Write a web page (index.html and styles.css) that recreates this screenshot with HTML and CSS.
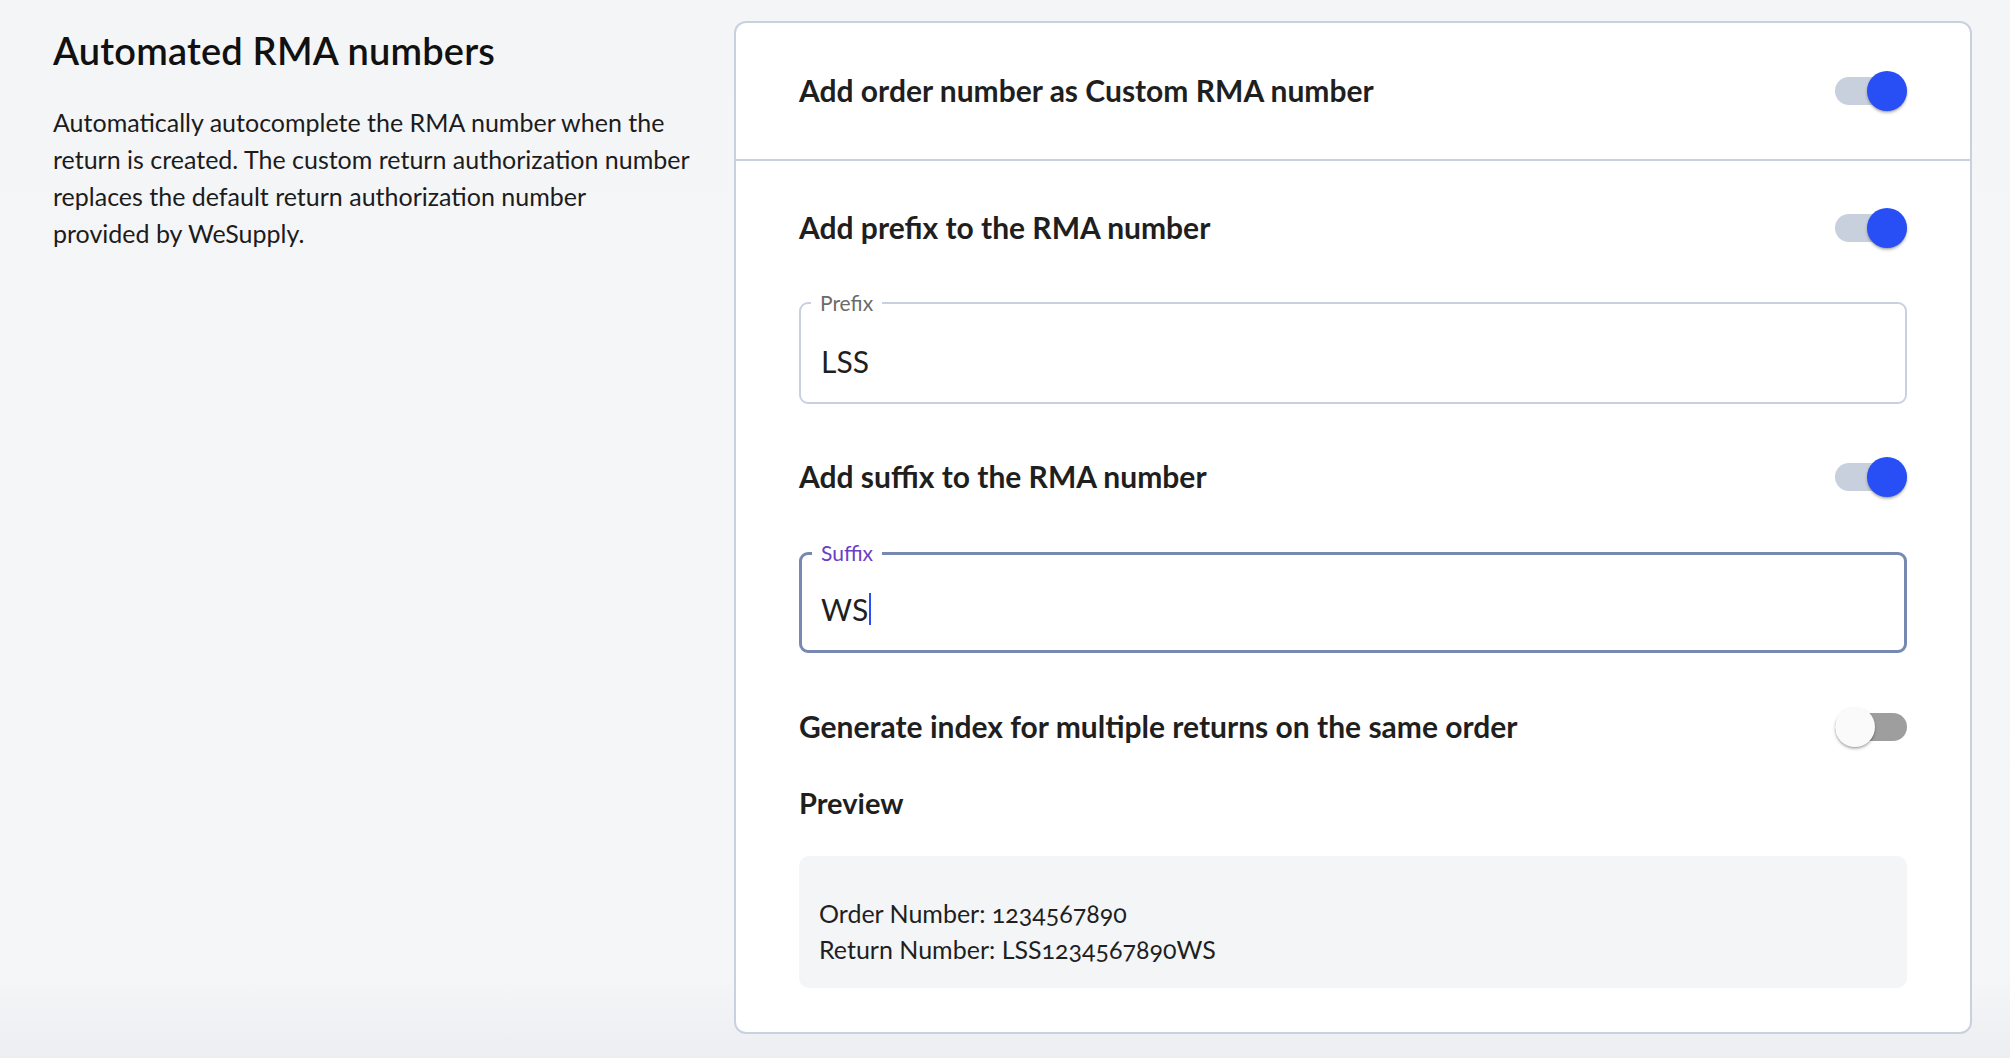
FILE: index.html
```html
<!DOCTYPE html>
<html lang="en">
<head>
<meta charset="utf-8">
<title>Automated RMA numbers</title>
<link rel="stylesheet" href="styles.css">
</head>
<body>
<div class="page">
  <section class="intro">
    <h1 class="intro-title">Automated RMA numbers</h1>
    <p class="intro-text">Automatically autocomplete the RMA number when the return is created. The custom return authorization number replaces the default return authorization number<br>provided by WeSupply.</p>
  </section>

  <div class="card">
    <div class="card-section card-head">
      <div class="setting-row">
        <span class="setting-title">Add order number as Custom RMA number</span>
        <span class="switch is-on"><span class="switch-track"></span><span class="switch-thumb"></span></span>
      </div>
    </div>

    <div class="card-section card-body">
      <div class="setting-row">
        <span class="setting-title">Add prefix to the RMA number</span>
        <span class="switch is-on"><span class="switch-track"></span><span class="switch-thumb"></span></span>
      </div>

      <fieldset class="field field-prefix">
        <legend class="field-label">Prefix</legend>
        <div class="field-value">LSS</div>
      </fieldset>

      <div class="setting-row row-suffix">
        <span class="setting-title">Add suffix to the RMA number</span>
        <span class="switch is-on"><span class="switch-track"></span><span class="switch-thumb"></span></span>
      </div>

      <fieldset class="field field-suffix is-focused">
        <legend class="field-label">Suffix</legend>
        <div class="field-value">WS<span class="caret"></span></div>
      </fieldset>

      <div class="setting-row row-index">
        <span class="setting-title">Generate index for multiple returns on the same order</span>
        <span class="switch is-off"><span class="switch-track"></span><span class="switch-thumb"></span></span>
      </div>

      <div class="preview-title">Preview</div>
      <div class="preview-box">
        <div class="preview-line">Order Number: 1234567890</div>
        <div class="preview-line">Return Number: LSS1234567890WS</div>
      </div>
    </div>
  </div>
</div>
</body>
</html>
```

FILE: styles.css
```css
html, body {
  margin: 0;
  padding: 0;
}

body {
  font-family: "Lato", "Open Sans", sans-serif;
  font-variant-numeric: oldstyle-nums;
  color: #1f1f1f;
  background: linear-gradient(to bottom, #f4f5f7 0%, #f5f6f8 92%, #eceef1 100%);
  min-height: 1058px;
}

.page {
  display: flex;
  align-items: flex-start;
  padding: 21px 38px 24px 53px;
}

.intro {
  width: 681px;
  flex: none;
}

.intro-title {
  margin: 7px 0 0;
  font-size: 38px;
  line-height: 44px;
  font-weight: 600;
  color: #111;
  letter-spacing: 0.2px;
}

.intro-text {
  margin: 32px 0 0;
  width: 650px;
  font-size: 25px;
  line-height: 37px;
  color: #1c1c1c;
}

.card {
  flex: 1;
  background: #fff;
  border: 2px solid #c9d1e0;
  border-radius: 12px;
  overflow: hidden;
}

.card-section {
  padding: 0 63px;
}

.card-head {
  padding-top: 48px;
  padding-bottom: 48px;
  border-bottom: 2px solid #c9d1e0;
}

.card-body {
  padding-top: 47px;
  padding-bottom: 44px;
  display: flex;
  flex-direction: column;
}

.setting-row {
  display: flex;
  align-items: center;
  justify-content: space-between;
  height: 40px;
}

.setting-title {
  font-size: 30px;
  font-weight: 700;
  color: #1f1f1f;
  margin-top: -3px;
}

.switch {
  position: relative;
  width: 72px;
  height: 40px;
  flex: none;
}

.switch-track {
  position: absolute;
  left: 0;
  right: 0;
  top: 6px;
  height: 28px;
  border-radius: 14px;
  background: #c8cfdd;
}

.switch-thumb {
  position: absolute;
  top: 0;
  width: 40px;
  height: 40px;
  border-radius: 50%;
  box-shadow: 0 2px 3px rgba(0, 0, 0, 0.25), 0 1px 1px rgba(0, 0, 0, 0.12);
}

.switch.is-on .switch-thumb {
  right: 0;
  background: #284ef5;
}

.switch.is-off .switch-track {
  background: #9e9e9e;
}

.switch.is-off .switch-thumb {
  left: 0;
  background: #fafafa;
}

.field {
  margin: 43px 0 0;
  padding: 0 20px;
  height: 113px;
  box-sizing: border-box;
  border: 2px solid #c9d1e0;
  border-radius: 9px;
}

.field-label {
  margin-left: -10px;
  padding: 0 9px;
  font-size: 21px;
  line-height: 24px;
  color: #6b6b6b;
}

.field-value {
  margin-top: 28px;
  font-size: 30px;
  line-height: 36px;
  color: #1f1f1f;
  display: flex;
  align-items: center;
}

.field.is-focused {
  margin-top: 44px;
  height: 112px;
  border: 3px solid #7789b1;
  padding: 0 19px;
}

.field.is-focused .field-label {
  color: #6a3ec6;
  margin-left: -9px;
}

.field.is-focused .field-value {
  margin-top: 26px;
}

.caret {
  display: inline-block;
  width: 2px;
  height: 32px;
  margin-left: 1px;
  background: #2a4ef5;
}

.row-suffix {
  margin-top: 53px;
}

.row-index {
  margin-top: 54px;
}

.preview-title {
  margin-top: 36px;
  font-size: 29px;
  line-height: 40px;
  font-weight: 700;
  color: #1f1f1f;
}

.preview-box {
  margin-top: 33px;
  background: #f4f5f7;
  border-radius: 10px;
  padding: 39px 20px 21px;
}

.preview-line {
  font-size: 25px;
  line-height: 36px;
  color: #1f1f1f;
}
```
